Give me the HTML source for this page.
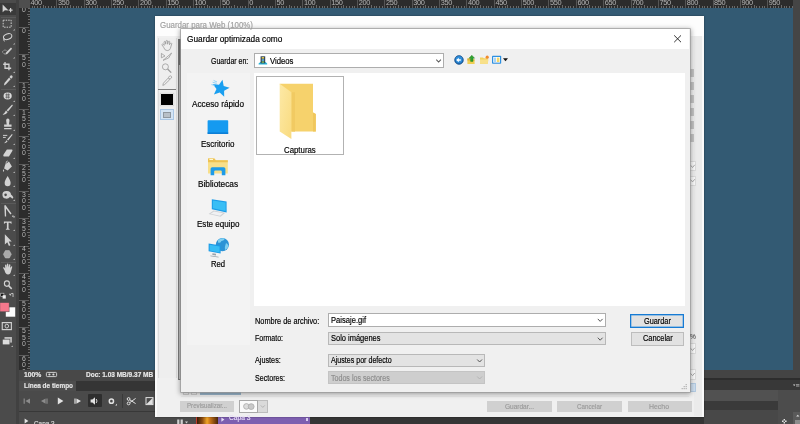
<!DOCTYPE html>
<html lang="es">
<head>
<meta charset="utf-8">
<title>Guardar optimizada como</title>
<style>
*{box-sizing:border-box;margin:0;padding:0}
html,body{width:800px;height:424px;overflow:hidden;background:#335a73;font-family:"Liberation Sans",sans-serif}
#app{position:relative;width:800px;height:424px;overflow:hidden;background:#335a73;filter:blur(.3px)}
.a{position:absolute}
svg{position:absolute;overflow:visible}
.t{position:absolute;white-space:nowrap;line-height:1;transform-origin:0 0;display:block;-webkit-text-stroke:.18px currentColor}
.rn{position:absolute;top:-.6px;font-size:7.4px;line-height:7px;color:#b4b4b4;white-space:nowrap;letter-spacing:-.35px}
.vn{position:absolute;left:20.5px;width:7px;font-size:6.9px;line-height:6.45px;color:#b4b4b4;text-align:center}
.htick{position:absolute;top:0;width:1px;height:8px;background:#555}
.vtick{position:absolute;left:19px;width:10px;height:1px;background:#5c5c5c}
#tools{left:0;top:0;width:16.2px;height:424px;background:#4b4b4b}
#hruler{left:19px;top:0;width:774px;height:8px;background:#2c2c2c;overflow:hidden}
#vruler{left:19px;top:8px;width:10.5px;height:362px;background:#2c2c2c;overflow:hidden}
#outer{left:155px;top:16px;width:549px;height:401.1px;background:#f0f0f0;box-shadow:0 0 1.5px rgba(0,0,0,.45)}
#inner{left:181.3px;top:29px;width:508.5px;height:362.5px;background:#f0f0f0;box-shadow:0 0 0 .7px #9c9c9c,0 1px 5px 1px rgba(0,0,0,.36)}
.combo{position:absolute;border:1px solid #b8b8b8;background:#e3e3e3}
.combo.w{background:#fff;border-color:#adadad}
.btn{position:absolute;border:1px solid #b2b2b2;background:#e2e2e2}
.gbtn{position:absolute;background:#d0d0d0}
.sq{position:absolute;left:689.5px;width:4.2px;height:8.5px;background:#c4c4c4}
.chv{position:absolute;left:689.5px;width:6.5px;height:10px;background:#fafafa;border:1px solid #dcdcdc;border-left:0}

</style>
</head>
<body>
<div id="app">
<!-- rulers -->
<div id="hruler" class="a">
<i class="htick" style="left:10.0px"></i><span class="rn" style="left:11.6px">400</span>
<i class="htick" style="left:12.7px;top:6px;height:2px;background:#6a6a6a"></i>
<i class="htick" style="left:15.4px;top:6px;height:2px;background:#6a6a6a"></i>
<i class="htick" style="left:18.2px;top:6px;height:2px;background:#6a6a6a"></i>
<i class="htick" style="left:20.9px;top:6px;height:2px;background:#6a6a6a"></i>
<i class="htick" style="left:23.7px;top:5px;height:3px;background:#6a6a6a"></i>
<i class="htick" style="left:26.4px;top:6px;height:2px;background:#6a6a6a"></i>
<i class="htick" style="left:29.1px;top:6px;height:2px;background:#6a6a6a"></i>
<i class="htick" style="left:31.9px;top:6px;height:2px;background:#6a6a6a"></i>
<i class="htick" style="left:34.6px;top:6px;height:2px;background:#6a6a6a"></i>
<i class="htick" style="left:37.3px"></i><span class="rn" style="left:38.9px">350</span>
<i class="htick" style="left:40.1px;top:6px;height:2px;background:#6a6a6a"></i>
<i class="htick" style="left:42.8px;top:6px;height:2px;background:#6a6a6a"></i>
<i class="htick" style="left:45.5px;top:6px;height:2px;background:#6a6a6a"></i>
<i class="htick" style="left:48.3px;top:6px;height:2px;background:#6a6a6a"></i>
<i class="htick" style="left:51.0px;top:5px;height:3px;background:#6a6a6a"></i>
<i class="htick" style="left:53.7px;top:6px;height:2px;background:#6a6a6a"></i>
<i class="htick" style="left:56.5px;top:6px;height:2px;background:#6a6a6a"></i>
<i class="htick" style="left:59.2px;top:6px;height:2px;background:#6a6a6a"></i>
<i class="htick" style="left:61.9px;top:6px;height:2px;background:#6a6a6a"></i>
<i class="htick" style="left:64.7px"></i><span class="rn" style="left:66.3px">300</span>
<i class="htick" style="left:67.4px;top:6px;height:2px;background:#6a6a6a"></i>
<i class="htick" style="left:70.1px;top:6px;height:2px;background:#6a6a6a"></i>
<i class="htick" style="left:72.9px;top:6px;height:2px;background:#6a6a6a"></i>
<i class="htick" style="left:75.6px;top:6px;height:2px;background:#6a6a6a"></i>
<i class="htick" style="left:78.3px;top:5px;height:3px;background:#6a6a6a"></i>
<i class="htick" style="left:81.1px;top:6px;height:2px;background:#6a6a6a"></i>
<i class="htick" style="left:83.8px;top:6px;height:2px;background:#6a6a6a"></i>
<i class="htick" style="left:86.5px;top:6px;height:2px;background:#6a6a6a"></i>
<i class="htick" style="left:89.3px;top:6px;height:2px;background:#6a6a6a"></i>
<i class="htick" style="left:92.0px"></i><span class="rn" style="left:93.6px">250</span>
<i class="htick" style="left:94.7px;top:6px;height:2px;background:#6a6a6a"></i>
<i class="htick" style="left:97.5px;top:6px;height:2px;background:#6a6a6a"></i>
<i class="htick" style="left:100.2px;top:6px;height:2px;background:#6a6a6a"></i>
<i class="htick" style="left:102.9px;top:6px;height:2px;background:#6a6a6a"></i>
<i class="htick" style="left:105.7px;top:5px;height:3px;background:#6a6a6a"></i>
<i class="htick" style="left:108.4px;top:6px;height:2px;background:#6a6a6a"></i>
<i class="htick" style="left:111.1px;top:6px;height:2px;background:#6a6a6a"></i>
<i class="htick" style="left:113.9px;top:6px;height:2px;background:#6a6a6a"></i>
<i class="htick" style="left:116.6px;top:6px;height:2px;background:#6a6a6a"></i>
<i class="htick" style="left:119.3px"></i><span class="rn" style="left:120.9px">200</span>
<i class="htick" style="left:122.1px;top:6px;height:2px;background:#6a6a6a"></i>
<i class="htick" style="left:124.8px;top:6px;height:2px;background:#6a6a6a"></i>
<i class="htick" style="left:127.5px;top:6px;height:2px;background:#6a6a6a"></i>
<i class="htick" style="left:130.3px;top:6px;height:2px;background:#6a6a6a"></i>
<i class="htick" style="left:133.0px;top:5px;height:3px;background:#6a6a6a"></i>
<i class="htick" style="left:135.7px;top:6px;height:2px;background:#6a6a6a"></i>
<i class="htick" style="left:138.5px;top:6px;height:2px;background:#6a6a6a"></i>
<i class="htick" style="left:141.2px;top:6px;height:2px;background:#6a6a6a"></i>
<i class="htick" style="left:143.9px;top:6px;height:2px;background:#6a6a6a"></i>
<i class="htick" style="left:146.7px"></i><span class="rn" style="left:148.3px">150</span>
<i class="htick" style="left:149.4px;top:6px;height:2px;background:#6a6a6a"></i>
<i class="htick" style="left:152.1px;top:6px;height:2px;background:#6a6a6a"></i>
<i class="htick" style="left:154.9px;top:6px;height:2px;background:#6a6a6a"></i>
<i class="htick" style="left:157.6px;top:6px;height:2px;background:#6a6a6a"></i>
<i class="htick" style="left:160.4px;top:5px;height:3px;background:#6a6a6a"></i>
<i class="htick" style="left:163.1px;top:6px;height:2px;background:#6a6a6a"></i>
<i class="htick" style="left:165.8px;top:6px;height:2px;background:#6a6a6a"></i>
<i class="htick" style="left:168.6px;top:6px;height:2px;background:#6a6a6a"></i>
<i class="htick" style="left:171.3px;top:6px;height:2px;background:#6a6a6a"></i>
<i class="htick" style="left:174.0px"></i><span class="rn" style="left:175.6px">100</span>
<i class="htick" style="left:176.8px;top:6px;height:2px;background:#6a6a6a"></i>
<i class="htick" style="left:179.5px;top:6px;height:2px;background:#6a6a6a"></i>
<i class="htick" style="left:182.2px;top:6px;height:2px;background:#6a6a6a"></i>
<i class="htick" style="left:185.0px;top:6px;height:2px;background:#6a6a6a"></i>
<i class="htick" style="left:187.7px;top:5px;height:3px;background:#6a6a6a"></i>
<i class="htick" style="left:190.4px;top:6px;height:2px;background:#6a6a6a"></i>
<i class="htick" style="left:193.2px;top:6px;height:2px;background:#6a6a6a"></i>
<i class="htick" style="left:195.9px;top:6px;height:2px;background:#6a6a6a"></i>
<i class="htick" style="left:198.6px;top:6px;height:2px;background:#6a6a6a"></i>
<i class="htick" style="left:201.4px"></i><span class="rn" style="left:203.0px">50</span>
<i class="htick" style="left:204.1px;top:6px;height:2px;background:#6a6a6a"></i>
<i class="htick" style="left:206.8px;top:6px;height:2px;background:#6a6a6a"></i>
<i class="htick" style="left:209.6px;top:6px;height:2px;background:#6a6a6a"></i>
<i class="htick" style="left:212.3px;top:6px;height:2px;background:#6a6a6a"></i>
<i class="htick" style="left:215.0px;top:5px;height:3px;background:#6a6a6a"></i>
<i class="htick" style="left:217.8px;top:6px;height:2px;background:#6a6a6a"></i>
<i class="htick" style="left:220.5px;top:6px;height:2px;background:#6a6a6a"></i>
<i class="htick" style="left:223.2px;top:6px;height:2px;background:#6a6a6a"></i>
<i class="htick" style="left:226.0px;top:6px;height:2px;background:#6a6a6a"></i>
<i class="htick" style="left:228.7px"></i><span class="rn" style="left:230.3px">0</span>
<i class="htick" style="left:231.4px;top:6px;height:2px;background:#6a6a6a"></i>
<i class="htick" style="left:234.2px;top:6px;height:2px;background:#6a6a6a"></i>
<i class="htick" style="left:236.9px;top:6px;height:2px;background:#6a6a6a"></i>
<i class="htick" style="left:239.6px;top:6px;height:2px;background:#6a6a6a"></i>
<i class="htick" style="left:242.4px;top:5px;height:3px;background:#6a6a6a"></i>
<i class="htick" style="left:245.1px;top:6px;height:2px;background:#6a6a6a"></i>
<i class="htick" style="left:247.8px;top:6px;height:2px;background:#6a6a6a"></i>
<i class="htick" style="left:250.6px;top:6px;height:2px;background:#6a6a6a"></i>
<i class="htick" style="left:253.3px;top:6px;height:2px;background:#6a6a6a"></i>
<i class="htick" style="left:256.0px"></i><span class="rn" style="left:257.6px">50</span>
<i class="htick" style="left:258.8px;top:6px;height:2px;background:#6a6a6a"></i>
<i class="htick" style="left:261.5px;top:6px;height:2px;background:#6a6a6a"></i>
<i class="htick" style="left:264.2px;top:6px;height:2px;background:#6a6a6a"></i>
<i class="htick" style="left:267.0px;top:6px;height:2px;background:#6a6a6a"></i>
<i class="htick" style="left:269.7px;top:5px;height:3px;background:#6a6a6a"></i>
<i class="htick" style="left:272.4px;top:6px;height:2px;background:#6a6a6a"></i>
<i class="htick" style="left:275.2px;top:6px;height:2px;background:#6a6a6a"></i>
<i class="htick" style="left:277.9px;top:6px;height:2px;background:#6a6a6a"></i>
<i class="htick" style="left:280.6px;top:6px;height:2px;background:#6a6a6a"></i>
<i class="htick" style="left:283.4px"></i><span class="rn" style="left:285.0px">100</span>
<i class="htick" style="left:286.1px;top:6px;height:2px;background:#6a6a6a"></i>
<i class="htick" style="left:288.8px;top:6px;height:2px;background:#6a6a6a"></i>
<i class="htick" style="left:291.6px;top:6px;height:2px;background:#6a6a6a"></i>
<i class="htick" style="left:294.3px;top:6px;height:2px;background:#6a6a6a"></i>
<i class="htick" style="left:297.1px;top:5px;height:3px;background:#6a6a6a"></i>
<i class="htick" style="left:299.8px;top:6px;height:2px;background:#6a6a6a"></i>
<i class="htick" style="left:302.5px;top:6px;height:2px;background:#6a6a6a"></i>
<i class="htick" style="left:305.3px;top:6px;height:2px;background:#6a6a6a"></i>
<i class="htick" style="left:308.0px;top:6px;height:2px;background:#6a6a6a"></i>
<i class="htick" style="left:310.7px"></i><span class="rn" style="left:312.3px">150</span>
<i class="htick" style="left:313.5px;top:6px;height:2px;background:#6a6a6a"></i>
<i class="htick" style="left:316.2px;top:6px;height:2px;background:#6a6a6a"></i>
<i class="htick" style="left:318.9px;top:6px;height:2px;background:#6a6a6a"></i>
<i class="htick" style="left:321.7px;top:6px;height:2px;background:#6a6a6a"></i>
<i class="htick" style="left:324.4px;top:5px;height:3px;background:#6a6a6a"></i>
<i class="htick" style="left:327.1px;top:6px;height:2px;background:#6a6a6a"></i>
<i class="htick" style="left:329.9px;top:6px;height:2px;background:#6a6a6a"></i>
<i class="htick" style="left:332.6px;top:6px;height:2px;background:#6a6a6a"></i>
<i class="htick" style="left:335.3px;top:6px;height:2px;background:#6a6a6a"></i>
<i class="htick" style="left:338.1px"></i><span class="rn" style="left:339.7px">200</span>
<i class="htick" style="left:340.8px;top:6px;height:2px;background:#6a6a6a"></i>
<i class="htick" style="left:343.5px;top:6px;height:2px;background:#6a6a6a"></i>
<i class="htick" style="left:346.3px;top:6px;height:2px;background:#6a6a6a"></i>
<i class="htick" style="left:349.0px;top:6px;height:2px;background:#6a6a6a"></i>
<i class="htick" style="left:351.7px;top:5px;height:3px;background:#6a6a6a"></i>
<i class="htick" style="left:354.5px;top:6px;height:2px;background:#6a6a6a"></i>
<i class="htick" style="left:357.2px;top:6px;height:2px;background:#6a6a6a"></i>
<i class="htick" style="left:359.9px;top:6px;height:2px;background:#6a6a6a"></i>
<i class="htick" style="left:362.7px;top:6px;height:2px;background:#6a6a6a"></i>
<i class="htick" style="left:365.4px"></i><span class="rn" style="left:367.0px">250</span>
<i class="htick" style="left:368.1px;top:6px;height:2px;background:#6a6a6a"></i>
<i class="htick" style="left:370.9px;top:6px;height:2px;background:#6a6a6a"></i>
<i class="htick" style="left:373.6px;top:6px;height:2px;background:#6a6a6a"></i>
<i class="htick" style="left:376.3px;top:6px;height:2px;background:#6a6a6a"></i>
<i class="htick" style="left:379.1px;top:5px;height:3px;background:#6a6a6a"></i>
<i class="htick" style="left:381.8px;top:6px;height:2px;background:#6a6a6a"></i>
<i class="htick" style="left:384.5px;top:6px;height:2px;background:#6a6a6a"></i>
<i class="htick" style="left:387.3px;top:6px;height:2px;background:#6a6a6a"></i>
<i class="htick" style="left:390.0px;top:6px;height:2px;background:#6a6a6a"></i>
<i class="htick" style="left:392.7px"></i><span class="rn" style="left:394.3px">300</span>
<i class="htick" style="left:395.5px;top:6px;height:2px;background:#6a6a6a"></i>
<i class="htick" style="left:398.2px;top:6px;height:2px;background:#6a6a6a"></i>
<i class="htick" style="left:400.9px;top:6px;height:2px;background:#6a6a6a"></i>
<i class="htick" style="left:403.7px;top:6px;height:2px;background:#6a6a6a"></i>
<i class="htick" style="left:406.4px;top:5px;height:3px;background:#6a6a6a"></i>
<i class="htick" style="left:409.1px;top:6px;height:2px;background:#6a6a6a"></i>
<i class="htick" style="left:411.9px;top:6px;height:2px;background:#6a6a6a"></i>
<i class="htick" style="left:414.6px;top:6px;height:2px;background:#6a6a6a"></i>
<i class="htick" style="left:417.3px;top:6px;height:2px;background:#6a6a6a"></i>
<i class="htick" style="left:420.1px"></i><span class="rn" style="left:421.7px">350</span>
<i class="htick" style="left:422.8px;top:6px;height:2px;background:#6a6a6a"></i>
<i class="htick" style="left:425.5px;top:6px;height:2px;background:#6a6a6a"></i>
<i class="htick" style="left:428.3px;top:6px;height:2px;background:#6a6a6a"></i>
<i class="htick" style="left:431.0px;top:6px;height:2px;background:#6a6a6a"></i>
<i class="htick" style="left:433.8px;top:5px;height:3px;background:#6a6a6a"></i>
<i class="htick" style="left:436.5px;top:6px;height:2px;background:#6a6a6a"></i>
<i class="htick" style="left:439.2px;top:6px;height:2px;background:#6a6a6a"></i>
<i class="htick" style="left:442.0px;top:6px;height:2px;background:#6a6a6a"></i>
<i class="htick" style="left:444.7px;top:6px;height:2px;background:#6a6a6a"></i>
<i class="htick" style="left:447.4px"></i><span class="rn" style="left:449.0px">400</span>
<i class="htick" style="left:450.2px;top:6px;height:2px;background:#6a6a6a"></i>
<i class="htick" style="left:452.9px;top:6px;height:2px;background:#6a6a6a"></i>
<i class="htick" style="left:455.6px;top:6px;height:2px;background:#6a6a6a"></i>
<i class="htick" style="left:458.4px;top:6px;height:2px;background:#6a6a6a"></i>
<i class="htick" style="left:461.1px;top:5px;height:3px;background:#6a6a6a"></i>
<i class="htick" style="left:463.8px;top:6px;height:2px;background:#6a6a6a"></i>
<i class="htick" style="left:466.6px;top:6px;height:2px;background:#6a6a6a"></i>
<i class="htick" style="left:469.3px;top:6px;height:2px;background:#6a6a6a"></i>
<i class="htick" style="left:472.0px;top:6px;height:2px;background:#6a6a6a"></i>
<i class="htick" style="left:474.8px"></i><span class="rn" style="left:476.4px">450</span>
<i class="htick" style="left:477.5px;top:6px;height:2px;background:#6a6a6a"></i>
<i class="htick" style="left:480.2px;top:6px;height:2px;background:#6a6a6a"></i>
<i class="htick" style="left:483.0px;top:6px;height:2px;background:#6a6a6a"></i>
<i class="htick" style="left:485.7px;top:6px;height:2px;background:#6a6a6a"></i>
<i class="htick" style="left:488.4px;top:5px;height:3px;background:#6a6a6a"></i>
<i class="htick" style="left:491.2px;top:6px;height:2px;background:#6a6a6a"></i>
<i class="htick" style="left:493.9px;top:6px;height:2px;background:#6a6a6a"></i>
<i class="htick" style="left:496.6px;top:6px;height:2px;background:#6a6a6a"></i>
<i class="htick" style="left:499.4px;top:6px;height:2px;background:#6a6a6a"></i>
<i class="htick" style="left:502.1px"></i><span class="rn" style="left:503.7px">500</span>
<i class="htick" style="left:504.8px;top:6px;height:2px;background:#6a6a6a"></i>
<i class="htick" style="left:507.6px;top:6px;height:2px;background:#6a6a6a"></i>
<i class="htick" style="left:510.3px;top:6px;height:2px;background:#6a6a6a"></i>
<i class="htick" style="left:513.0px;top:6px;height:2px;background:#6a6a6a"></i>
<i class="htick" style="left:515.8px;top:5px;height:3px;background:#6a6a6a"></i>
<i class="htick" style="left:518.5px;top:6px;height:2px;background:#6a6a6a"></i>
<i class="htick" style="left:521.2px;top:6px;height:2px;background:#6a6a6a"></i>
<i class="htick" style="left:524.0px;top:6px;height:2px;background:#6a6a6a"></i>
<i class="htick" style="left:526.7px;top:6px;height:2px;background:#6a6a6a"></i>
<i class="htick" style="left:529.4px"></i><span class="rn" style="left:531.0px">550</span>
<i class="htick" style="left:532.2px;top:6px;height:2px;background:#6a6a6a"></i>
<i class="htick" style="left:534.9px;top:6px;height:2px;background:#6a6a6a"></i>
<i class="htick" style="left:537.6px;top:6px;height:2px;background:#6a6a6a"></i>
<i class="htick" style="left:540.4px;top:6px;height:2px;background:#6a6a6a"></i>
<i class="htick" style="left:543.1px;top:5px;height:3px;background:#6a6a6a"></i>
<i class="htick" style="left:545.8px;top:6px;height:2px;background:#6a6a6a"></i>
<i class="htick" style="left:548.6px;top:6px;height:2px;background:#6a6a6a"></i>
<i class="htick" style="left:551.3px;top:6px;height:2px;background:#6a6a6a"></i>
<i class="htick" style="left:554.0px;top:6px;height:2px;background:#6a6a6a"></i>
<i class="htick" style="left:556.8px"></i><span class="rn" style="left:558.4px">600</span>
<i class="htick" style="left:559.5px;top:6px;height:2px;background:#6a6a6a"></i>
<i class="htick" style="left:562.2px;top:6px;height:2px;background:#6a6a6a"></i>
<i class="htick" style="left:565.0px;top:6px;height:2px;background:#6a6a6a"></i>
<i class="htick" style="left:567.7px;top:6px;height:2px;background:#6a6a6a"></i>
<i class="htick" style="left:570.4px;top:5px;height:3px;background:#6a6a6a"></i>
<i class="htick" style="left:573.2px;top:6px;height:2px;background:#6a6a6a"></i>
<i class="htick" style="left:575.9px;top:6px;height:2px;background:#6a6a6a"></i>
<i class="htick" style="left:578.7px;top:6px;height:2px;background:#6a6a6a"></i>
<i class="htick" style="left:581.4px;top:6px;height:2px;background:#6a6a6a"></i>
<i class="htick" style="left:584.1px"></i><span class="rn" style="left:585.7px">650</span>
<i class="htick" style="left:586.9px;top:6px;height:2px;background:#6a6a6a"></i>
<i class="htick" style="left:589.6px;top:6px;height:2px;background:#6a6a6a"></i>
<i class="htick" style="left:592.3px;top:6px;height:2px;background:#6a6a6a"></i>
<i class="htick" style="left:595.1px;top:6px;height:2px;background:#6a6a6a"></i>
<i class="htick" style="left:597.8px;top:5px;height:3px;background:#6a6a6a"></i>
<i class="htick" style="left:600.5px;top:6px;height:2px;background:#6a6a6a"></i>
<i class="htick" style="left:603.3px;top:6px;height:2px;background:#6a6a6a"></i>
<i class="htick" style="left:606.0px;top:6px;height:2px;background:#6a6a6a"></i>
<i class="htick" style="left:608.7px;top:6px;height:2px;background:#6a6a6a"></i>
<i class="htick" style="left:611.5px"></i><span class="rn" style="left:613.1px">700</span>
<i class="htick" style="left:614.2px;top:6px;height:2px;background:#6a6a6a"></i>
<i class="htick" style="left:616.9px;top:6px;height:2px;background:#6a6a6a"></i>
<i class="htick" style="left:619.7px;top:6px;height:2px;background:#6a6a6a"></i>
<i class="htick" style="left:622.4px;top:6px;height:2px;background:#6a6a6a"></i>
<i class="htick" style="left:625.1px;top:5px;height:3px;background:#6a6a6a"></i>
<i class="htick" style="left:627.9px;top:6px;height:2px;background:#6a6a6a"></i>
<i class="htick" style="left:630.6px;top:6px;height:2px;background:#6a6a6a"></i>
<i class="htick" style="left:633.3px;top:6px;height:2px;background:#6a6a6a"></i>
<i class="htick" style="left:636.1px;top:6px;height:2px;background:#6a6a6a"></i>
<i class="htick" style="left:638.8px"></i><span class="rn" style="left:640.4px">750</span>
<i class="htick" style="left:641.5px;top:6px;height:2px;background:#6a6a6a"></i>
<i class="htick" style="left:644.3px;top:6px;height:2px;background:#6a6a6a"></i>
<i class="htick" style="left:647.0px;top:6px;height:2px;background:#6a6a6a"></i>
<i class="htick" style="left:649.7px;top:6px;height:2px;background:#6a6a6a"></i>
<i class="htick" style="left:652.5px;top:5px;height:3px;background:#6a6a6a"></i>
<i class="htick" style="left:655.2px;top:6px;height:2px;background:#6a6a6a"></i>
<i class="htick" style="left:657.9px;top:6px;height:2px;background:#6a6a6a"></i>
<i class="htick" style="left:660.7px;top:6px;height:2px;background:#6a6a6a"></i>
<i class="htick" style="left:663.4px;top:6px;height:2px;background:#6a6a6a"></i>
<i class="htick" style="left:666.1px"></i><span class="rn" style="left:667.7px">800</span>
<i class="htick" style="left:668.9px;top:6px;height:2px;background:#6a6a6a"></i>
<i class="htick" style="left:671.6px;top:6px;height:2px;background:#6a6a6a"></i>
<i class="htick" style="left:674.3px;top:6px;height:2px;background:#6a6a6a"></i>
<i class="htick" style="left:677.1px;top:6px;height:2px;background:#6a6a6a"></i>
<i class="htick" style="left:679.8px;top:5px;height:3px;background:#6a6a6a"></i>
<i class="htick" style="left:682.5px;top:6px;height:2px;background:#6a6a6a"></i>
<i class="htick" style="left:685.3px;top:6px;height:2px;background:#6a6a6a"></i>
<i class="htick" style="left:688.0px;top:6px;height:2px;background:#6a6a6a"></i>
<i class="htick" style="left:690.7px;top:6px;height:2px;background:#6a6a6a"></i>
<i class="htick" style="left:693.5px"></i><span class="rn" style="left:695.1px">850</span>
<i class="htick" style="left:696.2px;top:6px;height:2px;background:#6a6a6a"></i>
<i class="htick" style="left:698.9px;top:6px;height:2px;background:#6a6a6a"></i>
<i class="htick" style="left:701.7px;top:6px;height:2px;background:#6a6a6a"></i>
<i class="htick" style="left:704.4px;top:6px;height:2px;background:#6a6a6a"></i>
<i class="htick" style="left:707.1px;top:5px;height:3px;background:#6a6a6a"></i>
<i class="htick" style="left:709.9px;top:6px;height:2px;background:#6a6a6a"></i>
<i class="htick" style="left:712.6px;top:6px;height:2px;background:#6a6a6a"></i>
<i class="htick" style="left:715.4px;top:6px;height:2px;background:#6a6a6a"></i>
<i class="htick" style="left:718.1px;top:6px;height:2px;background:#6a6a6a"></i>
<i class="htick" style="left:720.8px"></i><span class="rn" style="left:722.4px">900</span>
<i class="htick" style="left:723.6px;top:6px;height:2px;background:#6a6a6a"></i>
<i class="htick" style="left:726.3px;top:6px;height:2px;background:#6a6a6a"></i>
<i class="htick" style="left:729.0px;top:6px;height:2px;background:#6a6a6a"></i>
<i class="htick" style="left:731.8px;top:6px;height:2px;background:#6a6a6a"></i>
<i class="htick" style="left:734.5px;top:5px;height:3px;background:#6a6a6a"></i>
<i class="htick" style="left:737.2px;top:6px;height:2px;background:#6a6a6a"></i>
<i class="htick" style="left:740.0px;top:6px;height:2px;background:#6a6a6a"></i>
<i class="htick" style="left:742.7px;top:6px;height:2px;background:#6a6a6a"></i>
<i class="htick" style="left:745.4px;top:6px;height:2px;background:#6a6a6a"></i>
<i class="htick" style="left:748.2px"></i><span class="rn" style="left:749.8px">950</span>
<i class="htick" style="left:750.9px;top:6px;height:2px;background:#6a6a6a"></i>
<i class="htick" style="left:753.6px;top:6px;height:2px;background:#6a6a6a"></i>
<i class="htick" style="left:756.4px;top:6px;height:2px;background:#6a6a6a"></i>
<i class="htick" style="left:759.1px;top:6px;height:2px;background:#6a6a6a"></i>
<i class="htick" style="left:761.8px;top:5px;height:3px;background:#6a6a6a"></i>
<i class="htick" style="left:764.6px;top:6px;height:2px;background:#6a6a6a"></i>
<i class="htick" style="left:767.3px;top:6px;height:2px;background:#6a6a6a"></i>
<i class="htick" style="left:770.0px;top:6px;height:2px;background:#6a6a6a"></i>
<i class="htick" style="left:772.8px;top:6px;height:2px;background:#6a6a6a"></i>
</div>
<div id="vruler" class="a">
<i class="vtick" style="left:0;top:-8.2px"></i><span class="vn" style="left:1.5px;top:-7.3px">5<br>0</span>
<i class="vtick" style="left:8.5px;width:2px;top:-5.5px;background:#6a6a6a"></i>
<i class="vtick" style="left:8.5px;width:2px;top:-2.7px;background:#6a6a6a"></i>
<i class="vtick" style="left:8.5px;width:2px;top:-0.0px;background:#6a6a6a"></i>
<i class="vtick" style="left:8.5px;width:2px;top:2.7px;background:#6a6a6a"></i>
<i class="vtick" style="left:7.5px;width:3px;top:5.5px;background:#6a6a6a"></i>
<i class="vtick" style="left:8.5px;width:2px;top:8.2px;background:#6a6a6a"></i>
<i class="vtick" style="left:8.5px;width:2px;top:10.9px;background:#6a6a6a"></i>
<i class="vtick" style="left:8.5px;width:2px;top:13.6px;background:#6a6a6a"></i>
<i class="vtick" style="left:8.5px;width:2px;top:16.4px;background:#6a6a6a"></i>
<i class="vtick" style="left:0;top:19.1px"></i><span class="vn" style="left:1.5px;top:20.0px">0</span>
<i class="vtick" style="left:8.5px;width:2px;top:21.8px;background:#6a6a6a"></i>
<i class="vtick" style="left:8.5px;width:2px;top:24.6px;background:#6a6a6a"></i>
<i class="vtick" style="left:8.5px;width:2px;top:27.3px;background:#6a6a6a"></i>
<i class="vtick" style="left:8.5px;width:2px;top:30.0px;background:#6a6a6a"></i>
<i class="vtick" style="left:7.5px;width:3px;top:32.8px;background:#6a6a6a"></i>
<i class="vtick" style="left:8.5px;width:2px;top:35.5px;background:#6a6a6a"></i>
<i class="vtick" style="left:8.5px;width:2px;top:38.2px;background:#6a6a6a"></i>
<i class="vtick" style="left:8.5px;width:2px;top:40.9px;background:#6a6a6a"></i>
<i class="vtick" style="left:8.5px;width:2px;top:43.7px;background:#6a6a6a"></i>
<i class="vtick" style="left:0;top:46.4px"></i><span class="vn" style="left:1.5px;top:47.3px">5<br>0</span>
<i class="vtick" style="left:8.5px;width:2px;top:49.1px;background:#6a6a6a"></i>
<i class="vtick" style="left:8.5px;width:2px;top:51.9px;background:#6a6a6a"></i>
<i class="vtick" style="left:8.5px;width:2px;top:54.6px;background:#6a6a6a"></i>
<i class="vtick" style="left:8.5px;width:2px;top:57.3px;background:#6a6a6a"></i>
<i class="vtick" style="left:7.5px;width:3px;top:60.1px;background:#6a6a6a"></i>
<i class="vtick" style="left:8.5px;width:2px;top:62.8px;background:#6a6a6a"></i>
<i class="vtick" style="left:8.5px;width:2px;top:65.5px;background:#6a6a6a"></i>
<i class="vtick" style="left:8.5px;width:2px;top:68.2px;background:#6a6a6a"></i>
<i class="vtick" style="left:8.5px;width:2px;top:71.0px;background:#6a6a6a"></i>
<i class="vtick" style="left:0;top:73.7px"></i><span class="vn" style="left:1.5px;top:74.6px">1<br>0<br>0</span>
<i class="vtick" style="left:8.5px;width:2px;top:76.4px;background:#6a6a6a"></i>
<i class="vtick" style="left:8.5px;width:2px;top:79.2px;background:#6a6a6a"></i>
<i class="vtick" style="left:8.5px;width:2px;top:81.9px;background:#6a6a6a"></i>
<i class="vtick" style="left:8.5px;width:2px;top:84.6px;background:#6a6a6a"></i>
<i class="vtick" style="left:7.5px;width:3px;top:87.4px;background:#6a6a6a"></i>
<i class="vtick" style="left:8.5px;width:2px;top:90.1px;background:#6a6a6a"></i>
<i class="vtick" style="left:8.5px;width:2px;top:92.8px;background:#6a6a6a"></i>
<i class="vtick" style="left:8.5px;width:2px;top:95.5px;background:#6a6a6a"></i>
<i class="vtick" style="left:8.5px;width:2px;top:98.3px;background:#6a6a6a"></i>
<i class="vtick" style="left:0;top:101.0px"></i><span class="vn" style="left:1.5px;top:101.9px">1<br>5<br>0</span>
<i class="vtick" style="left:8.5px;width:2px;top:103.7px;background:#6a6a6a"></i>
<i class="vtick" style="left:8.5px;width:2px;top:106.5px;background:#6a6a6a"></i>
<i class="vtick" style="left:8.5px;width:2px;top:109.2px;background:#6a6a6a"></i>
<i class="vtick" style="left:8.5px;width:2px;top:111.9px;background:#6a6a6a"></i>
<i class="vtick" style="left:7.5px;width:3px;top:114.7px;background:#6a6a6a"></i>
<i class="vtick" style="left:8.5px;width:2px;top:117.4px;background:#6a6a6a"></i>
<i class="vtick" style="left:8.5px;width:2px;top:120.1px;background:#6a6a6a"></i>
<i class="vtick" style="left:8.5px;width:2px;top:122.8px;background:#6a6a6a"></i>
<i class="vtick" style="left:8.5px;width:2px;top:125.6px;background:#6a6a6a"></i>
<i class="vtick" style="left:0;top:128.3px"></i><span class="vn" style="left:1.5px;top:129.2px">2<br>0<br>0</span>
<i class="vtick" style="left:8.5px;width:2px;top:131.0px;background:#6a6a6a"></i>
<i class="vtick" style="left:8.5px;width:2px;top:133.8px;background:#6a6a6a"></i>
<i class="vtick" style="left:8.5px;width:2px;top:136.5px;background:#6a6a6a"></i>
<i class="vtick" style="left:8.5px;width:2px;top:139.2px;background:#6a6a6a"></i>
<i class="vtick" style="left:7.5px;width:3px;top:142.0px;background:#6a6a6a"></i>
<i class="vtick" style="left:8.5px;width:2px;top:144.7px;background:#6a6a6a"></i>
<i class="vtick" style="left:8.5px;width:2px;top:147.4px;background:#6a6a6a"></i>
<i class="vtick" style="left:8.5px;width:2px;top:150.1px;background:#6a6a6a"></i>
<i class="vtick" style="left:8.5px;width:2px;top:152.9px;background:#6a6a6a"></i>
<i class="vtick" style="left:0;top:155.6px"></i><span class="vn" style="left:1.5px;top:156.5px">2<br>5<br>0</span>
<i class="vtick" style="left:8.5px;width:2px;top:158.3px;background:#6a6a6a"></i>
<i class="vtick" style="left:8.5px;width:2px;top:161.1px;background:#6a6a6a"></i>
<i class="vtick" style="left:8.5px;width:2px;top:163.8px;background:#6a6a6a"></i>
<i class="vtick" style="left:8.5px;width:2px;top:166.5px;background:#6a6a6a"></i>
<i class="vtick" style="left:7.5px;width:3px;top:169.2px;background:#6a6a6a"></i>
<i class="vtick" style="left:8.5px;width:2px;top:172.0px;background:#6a6a6a"></i>
<i class="vtick" style="left:8.5px;width:2px;top:174.7px;background:#6a6a6a"></i>
<i class="vtick" style="left:8.5px;width:2px;top:177.4px;background:#6a6a6a"></i>
<i class="vtick" style="left:8.5px;width:2px;top:180.2px;background:#6a6a6a"></i>
<i class="vtick" style="left:0;top:182.9px"></i><span class="vn" style="left:1.5px;top:183.8px">3<br>0<br>0</span>
<i class="vtick" style="left:8.5px;width:2px;top:185.6px;background:#6a6a6a"></i>
<i class="vtick" style="left:8.5px;width:2px;top:188.4px;background:#6a6a6a"></i>
<i class="vtick" style="left:8.5px;width:2px;top:191.1px;background:#6a6a6a"></i>
<i class="vtick" style="left:8.5px;width:2px;top:193.8px;background:#6a6a6a"></i>
<i class="vtick" style="left:7.5px;width:3px;top:196.6px;background:#6a6a6a"></i>
<i class="vtick" style="left:8.5px;width:2px;top:199.3px;background:#6a6a6a"></i>
<i class="vtick" style="left:8.5px;width:2px;top:202.0px;background:#6a6a6a"></i>
<i class="vtick" style="left:8.5px;width:2px;top:204.7px;background:#6a6a6a"></i>
<i class="vtick" style="left:8.5px;width:2px;top:207.5px;background:#6a6a6a"></i>
<i class="vtick" style="left:0;top:210.2px"></i><span class="vn" style="left:1.5px;top:211.1px">3<br>5<br>0</span>
<i class="vtick" style="left:8.5px;width:2px;top:212.9px;background:#6a6a6a"></i>
<i class="vtick" style="left:8.5px;width:2px;top:215.7px;background:#6a6a6a"></i>
<i class="vtick" style="left:8.5px;width:2px;top:218.4px;background:#6a6a6a"></i>
<i class="vtick" style="left:8.5px;width:2px;top:221.1px;background:#6a6a6a"></i>
<i class="vtick" style="left:7.5px;width:3px;top:223.8px;background:#6a6a6a"></i>
<i class="vtick" style="left:8.5px;width:2px;top:226.6px;background:#6a6a6a"></i>
<i class="vtick" style="left:8.5px;width:2px;top:229.3px;background:#6a6a6a"></i>
<i class="vtick" style="left:8.5px;width:2px;top:232.0px;background:#6a6a6a"></i>
<i class="vtick" style="left:8.5px;width:2px;top:234.8px;background:#6a6a6a"></i>
<i class="vtick" style="left:0;top:237.5px"></i><span class="vn" style="left:1.5px;top:238.4px">4<br>0<br>0</span>
<i class="vtick" style="left:8.5px;width:2px;top:240.2px;background:#6a6a6a"></i>
<i class="vtick" style="left:8.5px;width:2px;top:243.0px;background:#6a6a6a"></i>
<i class="vtick" style="left:8.5px;width:2px;top:245.7px;background:#6a6a6a"></i>
<i class="vtick" style="left:8.5px;width:2px;top:248.4px;background:#6a6a6a"></i>
<i class="vtick" style="left:7.5px;width:3px;top:251.2px;background:#6a6a6a"></i>
<i class="vtick" style="left:8.5px;width:2px;top:253.9px;background:#6a6a6a"></i>
<i class="vtick" style="left:8.5px;width:2px;top:256.6px;background:#6a6a6a"></i>
<i class="vtick" style="left:8.5px;width:2px;top:259.3px;background:#6a6a6a"></i>
<i class="vtick" style="left:8.5px;width:2px;top:262.1px;background:#6a6a6a"></i>
<i class="vtick" style="left:0;top:264.8px"></i><span class="vn" style="left:1.5px;top:265.7px">4<br>5<br>0</span>
<i class="vtick" style="left:8.5px;width:2px;top:267.5px;background:#6a6a6a"></i>
<i class="vtick" style="left:8.5px;width:2px;top:270.3px;background:#6a6a6a"></i>
<i class="vtick" style="left:8.5px;width:2px;top:273.0px;background:#6a6a6a"></i>
<i class="vtick" style="left:8.5px;width:2px;top:275.7px;background:#6a6a6a"></i>
<i class="vtick" style="left:7.5px;width:3px;top:278.4px;background:#6a6a6a"></i>
<i class="vtick" style="left:8.5px;width:2px;top:281.2px;background:#6a6a6a"></i>
<i class="vtick" style="left:8.5px;width:2px;top:283.9px;background:#6a6a6a"></i>
<i class="vtick" style="left:8.5px;width:2px;top:286.6px;background:#6a6a6a"></i>
<i class="vtick" style="left:8.5px;width:2px;top:289.4px;background:#6a6a6a"></i>
<i class="vtick" style="left:0;top:292.1px"></i><span class="vn" style="left:1.5px;top:293.0px">5<br>0<br>0</span>
<i class="vtick" style="left:8.5px;width:2px;top:294.8px;background:#6a6a6a"></i>
<i class="vtick" style="left:8.5px;width:2px;top:297.6px;background:#6a6a6a"></i>
<i class="vtick" style="left:8.5px;width:2px;top:300.3px;background:#6a6a6a"></i>
<i class="vtick" style="left:8.5px;width:2px;top:303.0px;background:#6a6a6a"></i>
<i class="vtick" style="left:7.5px;width:3px;top:305.8px;background:#6a6a6a"></i>
<i class="vtick" style="left:8.5px;width:2px;top:308.5px;background:#6a6a6a"></i>
<i class="vtick" style="left:8.5px;width:2px;top:311.2px;background:#6a6a6a"></i>
<i class="vtick" style="left:8.5px;width:2px;top:313.9px;background:#6a6a6a"></i>
<i class="vtick" style="left:8.5px;width:2px;top:316.7px;background:#6a6a6a"></i>
<i class="vtick" style="left:0;top:319.4px"></i><span class="vn" style="left:1.5px;top:320.3px">5<br>5<br>0</span>
<i class="vtick" style="left:8.5px;width:2px;top:322.1px;background:#6a6a6a"></i>
<i class="vtick" style="left:8.5px;width:2px;top:324.9px;background:#6a6a6a"></i>
<i class="vtick" style="left:8.5px;width:2px;top:327.6px;background:#6a6a6a"></i>
<i class="vtick" style="left:8.5px;width:2px;top:330.3px;background:#6a6a6a"></i>
<i class="vtick" style="left:7.5px;width:3px;top:333.1px;background:#6a6a6a"></i>
<i class="vtick" style="left:8.5px;width:2px;top:335.8px;background:#6a6a6a"></i>
<i class="vtick" style="left:8.5px;width:2px;top:338.5px;background:#6a6a6a"></i>
<i class="vtick" style="left:8.5px;width:2px;top:341.2px;background:#6a6a6a"></i>
<i class="vtick" style="left:8.5px;width:2px;top:344.0px;background:#6a6a6a"></i>
<i class="vtick" style="left:0;top:346.7px"></i><span class="vn" style="left:1.5px;top:347.6px">6<br>0<br>0</span>
<i class="vtick" style="left:8.5px;width:2px;top:349.4px;background:#6a6a6a"></i>
<i class="vtick" style="left:8.5px;width:2px;top:352.2px;background:#6a6a6a"></i>
<i class="vtick" style="left:8.5px;width:2px;top:354.9px;background:#6a6a6a"></i>
<i class="vtick" style="left:8.5px;width:2px;top:357.6px;background:#6a6a6a"></i>
<i class="vtick" style="left:7.5px;width:3px;top:360.4px;background:#6a6a6a"></i>
<i class="vtick" style="left:8.5px;width:2px;top:363.1px;background:#6a6a6a"></i>
<i class="vtick" style="left:8.5px;width:2px;top:365.8px;background:#6a6a6a"></i>
<i class="vtick" style="left:8.5px;width:2px;top:368.5px;background:#6a6a6a"></i>
<i class="vtick" style="left:8.5px;width:2px;top:371.3px;background:#6a6a6a"></i>
</div>
<div class="a" style="left:16.2px;top:0;width:2.8px;height:424px;background:#414141"></div>
<div class="a" style="left:19px;top:0;width:10.5px;height:7.6px;background:#4e4e4e"></div>
<div class="a" style="left:793px;top:0;width:7px;height:378px;background:#454545"></div>
<!-- ===== Photoshop tool bar ===== -->
<div id="tools" class="a">
  <div class="a" style="left:0;top:3.2px;width:16.2px;height:11.8px;background:#3a3a3a"></div>
  <div class="a" style="left:1px;top:16.5px;width:15px;height:1px;background:#5a5a5a"></div>
  <div class="a" style="left:1px;top:88.5px;width:15px;height:1px;background:#5a5a5a"></div>
  <div class="a" style="left:1px;top:202.5px;width:15px;height:1px;background:#5a5a5a"></div>
  <div class="a" style="left:1px;top:261.5px;width:15px;height:1px;background:#5a5a5a"></div>
  <svg style="left:0;top:0" width="18" height="350" viewBox="0 0 18 350" fill="#d2d2d2" stroke="none"><g transform="translate(.2 0) scale(.93 1)">
    <!-- move -->
    <path d="M2.6 4.6 L2.6 12.2 L5 10.2 L9 10.4 Z"/><path d="M9.2 9.5h1.4v-1.6h1.2v1.6h1.5v1.2h-1.5v1.6h-1.2v-1.6h-1.4z"/>
    <!-- marquee -->
    <rect x="3.2" y="20.2" width="8.6" height="7" fill="none" stroke="#d2d2d2" stroke-width="1" stroke-dasharray="1.6 1.1"/>
    <!-- lasso -->
    <ellipse cx="8" cy="36.6" rx="4.6" ry="2.8" fill="none" stroke="#d2d2d2" stroke-width="1.1" transform="rotate(-18 8 36.6)"/><path d="M4.2 38.4 q-1 1.6 .4 3" fill="none" stroke="#d2d2d2" stroke-width="1"/>
    <!-- quick select -->
    <path d="M11.6 47.6 L12.8 48.8 L7.6 54 L5.6 54.6 L6.3 52.6 Z"/><ellipse cx="5.2" cy="52" rx="2.6" ry="1.9" fill="none" stroke="#d2d2d2" stroke-width=".8" stroke-dasharray="1 .8"/>
    <!-- crop -->
    <path d="M5.2 62v6.2h6.6M3.2 64.2h6.2v6" fill="none" stroke="#d2d2d2" stroke-width="1.4"/>
    <!-- eyedropper -->
    <path d="M11.2 75.4 a1.5 1.5 0 0 1 2 2 L11.8 78.8 L10 77 Z M9.6 77.6 L11.2 79.2 L6 84.4 L4 85.4 L4.6 83 Z"/>
    <!-- healing -->
    <ellipse cx="8" cy="96" rx="4.4" ry="3.4" fill="#dcdcdc"/><path d="M5.6 94.4h4.8M5.6 96h4.8M5.6 97.6h4.8M7 93.4v5.2M9 93.4v5.2" stroke="#4b4b4b" stroke-width=".6"/>
    <!-- brush -->
    <path d="M12.8 104.6 L13.6 105.4 L8.4 111.4 L7 110.2 Z M6.2 110.6 L8 112.2 Q6.4 115 2.6 114.6 Q4.8 113.4 6.2 110.6Z"/>
    <!-- stamp -->
    <path d="M6.4 120.4 a1.8 1.8 0 0 1 3.6 0 L9.4 124.6 h2.8 v2.2 h-8 v-2.2 h2.8 Z M4.2 128h8v1.2h-8z"/>
    <!-- history brush -->
    <path d="M12.6 134 L13.4 134.8 L8.6 140.6 L7.4 139.6 Z M6.8 140.2 L8 141.2 Q6.8 143.2 4 143.2 Q5.8 142 6.8 140.2Z"/><path d="M3 135.4 l4.6 0 M3 137.4 l3 0" stroke="#d2d2d2" stroke-width="1"/>
    <!-- eraser -->
    <path d="M7.2 149.4 L12.8 149.4 Q13.6 150.2 13 151 L9.4 156.4 L3.8 156.4 Q2.8 155.4 3.6 154.4 Z"/>
    <!-- bucket -->
    <path d="M5.4 164.4 L9.4 161.6 L12.6 166.6 L8 170.4 L4.2 168.6 Z M3.6 169 q-1.4 2 0 3 q1.4 -1 0 -3z"/><path d="M6.2 164 q0 -3.4 2 -3" stroke="#d2d2d2" stroke-width=".8" fill="none"/>
    <!-- blur drop -->
    <path d="M8 176 Q11.4 181 11.2 183 a3.2 3.2 0 0 1 -6.4 0 Q4.6 181 8 176Z"/>
    <!-- dodge -->
    <path d="M2.4 195 a4.6 3.8 0 0 1 9.2 -.4 q1.6 1 2.6 3 l-1.2 1.2 q-1.2 -1.6 -2.6 -1.8 q-1.6 2 -4.4 1.6 q-3.6 -.6 -3.6 -3.6z"/><circle cx="5.8" cy="194.8" r="1.4" fill="#4b4b4b"/>
    <!-- pen -->
    <path d="M4.4 205.4 L5.6 205 L12.2 213.6 L11 214.4 L6.2 208.6 L6.4 216.4 L5 216.4 Z"/><path d="M13 215.6h1.4v1.4h-1.4z"/>
    <!-- T -->
    <path d="M4 221.6h8.2v2.2h-.7q-.2 -1.1 -1.3 -1.1h-1.2v5.6q0 .7 1.1 .7v.7h-4v-.7q1.1 0 1.1 -.7v-5.6h-1.2q-1.1 0 -1.3 1.1h-.7z"/>
    <!-- path select -->
    <path d="M5 234.2 L5 244.6 L7.6 242.2 L9.4 246 L11 245.2 L9.2 241.6 L12.4 241.4 Z"/>
    <!-- hexagon -->
    <path d="M5.6 250.6 h4.2 l2.2 3.7 l-2.2 3.7 h-4.2 l-2.2 -3.7z" fill="#a9a9a9" stroke="#c4c4c4" stroke-width=".5"/>
    <!-- hand -->
    <path d="M4.6 270.2 L3 267.8 Q3.4 266.8 4.6 267.6 L5.4 268.6 L5.2 265 Q6 264.2 6.6 265 L6.9 267.4 L7.2 264 Q8 263.2 8.7 264 L8.8 267.4 L9.6 264.6 Q10.4 264 11 264.8 L10.6 268 L11.8 266.4 Q12.6 266 13 266.8 L11.6 271.6 Q11 274.6 8.4 274.6 Q5.8 274.6 4.6 270.2Z"/>
    <!-- zoom -->
    <circle cx="7.2" cy="283.6" r="2.7" fill="none" stroke="#d2d2d2" stroke-width="1.2"/><path d="M9.2 285.8 L12.4 288.8" stroke="#d2d2d2" stroke-width="1.7"/>
    <!-- default/swap colours -->
    <rect x=".6" y="293.2" width="3.4" height="3.4" fill="#111" stroke="#ddd" stroke-width=".6"/><rect x="2.6" y="295.2" width="3.4" height="3.4" fill="#eee"/>
    <path d="M10.4 295 q1.2 -2 3.4 -1.6 v3.6 M10.4 295 l0 -1.4 M10.4 295 l1.4 0" fill="none" stroke="#d2d2d2" stroke-width=".9"/>
    <!-- swatches -->
    <rect x="6.02" y="307.3" width="10.1" height="9.4" fill="#fcfcfc"/>
    <rect x="-.3" y="302.6" width="9.9" height="9.2" fill="#f4788c" stroke="#4b4b4b" stroke-width=".5"/>
    <!-- quick mask -->
    <rect x="2.2" y="322.6" width="9.8" height="7" fill="none" stroke="#d2d2d2" stroke-width="1.2"/><circle cx="7.1" cy="326.1" r="1.9" fill="none" stroke="#d2d2d2" stroke-width="1"/>
    <!-- screen mode -->
    <rect x="4.6" y="337" width="8" height="5.6" fill="#bdbdbd"/><rect x="2.4" y="339.2" width="8" height="5.6" fill="#dcdcdc" stroke="#4b4b4b" stroke-width=".6"/>
    </g>
    <!-- flyout corners -->
    <g fill="#cfcfcf"><path d="M13.1 30.6h1.6v-1.6z M13.1 44.6h1.6v-1.6z M13.1 58.6h1.6v-1.6z M13.1 73h1.6v-1.6z M13.1 87h1.6v-1.6z M13.1 102h1.6v-1.6z M13.1 116h1.6v-1.6z M13.1 131h1.6v-1.6z M13.1 145h1.6v-1.6z M13.1 159h1.6v-1.6z M13.1 173h1.6v-1.6z M13.1 187h1.6v-1.6z M13.1 201h1.6v-1.6z M13.1 217.4h1.6v-1.6z M13.1 231h1.6v-1.6z M13.1 246h1.6v-1.6z M13.1 260h1.6v-1.6z M13.1 276h1.6v-1.6z M11.1 347h1.6v-1.6z"/></g>
  </svg>
</div>

<!-- ===== status bar ===== -->
<div class="a" style="left:19px;top:370px;width:137px;height:10.6px;background:#484848"></div>
<svg style="left:46px;top:372.4px" width="11" height="5" viewBox="0 0 11 5"><rect x=".4" y=".4" width="10.2" height="4.2" rx="1" fill="none" stroke="#dedede" stroke-width=".9"/><circle cx="3.4" cy="2.5" r="1.1" fill="#dedede"/><circle cx="7.4" cy="2.5" r="1.1" fill="#dedede"/></svg>

<!-- ===== timeline panel ===== -->
<div class="a" style="left:19px;top:380.6px;width:686px;height:44px;background:#353535"></div>
<div class="a" style="left:19px;top:381.2px;width:57px;height:10px;background:#4d4d4d"></div>
<div class="a" style="left:19px;top:391.2px;width:138px;height:20px;background:#4a4a4a"></div>
<div class="a" style="left:19px;top:411.4px;width:138px;height:.9px;background:#383838"></div>
<div class="a" style="left:19px;top:412.3px;width:178px;height:12px;background:#4a4a4a"></div>
<div class="a" style="left:88px;top:394px;width:13.6px;height:13.2px;background:#2e2e2e;border-radius:1px"></div>
<div class="a" style="left:122px;top:394px;width:1px;height:14px;background:#3a3a3a"></div>
<svg style="left:19px;top:392px" width="140" height="32" viewBox="19 392 140 32" fill="#e2e2e2">
  <g fill="#8b8b8b"><path d="M23.6 398.4h1.2v5.4h-1.2z M30 398.4v5.4l-4.6-2.7z"/><path d="M45.6 398.4v5.4l-4.6-2.7z M46.4 398.4h1.2v5.4h-1.2z"/></g>
  <path d="M57.8 397.6 L63.4 401 L57.8 404.4Z"/>
  <path d="M74.4 398.4h1.2v5.4h-1.2z M76.4 398.4l4.6 2.7l-4.6 2.7z"/>
  <path d="M90.6 399.6h1.8l2.6-2.4v7.6l-2.6-2.4h-1.8z"/><path d="M96.2 399 q1.6 2 0 4" fill="none" stroke="#e2e2e2" stroke-width=".9"/>
  <circle cx="111.4" cy="401.2" r="2.1" fill="none" stroke="#e2e2e2" stroke-width="1.5"/><path d="M115.2 405.6h1.8v-1.8z"/>
  <g fill="none" stroke="#e2e2e2" stroke-width="1"><circle cx="128.6" cy="399" r="1.4"/><circle cx="128.6" cy="403.4" r="1.4"/><path d="M129.8 399.8 L135.6 403.6 M129.8 402.6 L135.6 398.4"/></g>
  <rect x="146" y="397.6" width="7" height="7" fill="none" stroke="#e2e2e2" stroke-width="1"/><path d="M146.4 404.2 L152.6 398 V404.2Z"/>
  <path d="M24.6 418.4 L28.4 421 L24.6 423.6Z"/>
  <path d="M177.2 419.4h2.2v5h-2.2z M180.6 419.4h2.2v5h-2.2z" fill="#cfcfcf"/><path d="M185 421.6h3l-1.5 1.8z" fill="#cfcfcf"/>
</svg>
<!-- clip thumbnail and purple clip -->
<div class="a" style="left:196px;top:416.5px;width:1.4px;height:8px;background:#c23a2a"></div>
<div class="a" style="left:197.4px;top:416.5px;width:20.4px;height:8px;background:linear-gradient(90deg,#3a1c08 0,#8a4a10 25%,#f0a628 48%,#c97418 62%,#4a2608 100%)"></div>
<div class="a" style="left:217.8px;top:416.5px;width:92.4px;height:8px;background:#7d5fb0"></div>
<div class="a" style="left:305.5px;top:418px;width:2.6px;height:2.6px;border:.7px solid #d9cdee"></div>
<svg style="left:221px;top:417.4px" width="4" height="6" viewBox="0 0 4 6"><path d="M.4 .4 L3.4 2.6 L.4 4.8Z" fill="#e6dcf5"/></svg>

<!-- ===== right-bottom panels ===== -->
<div class="a" style="left:704px;top:370px;width:96px;height:8.4px;background:#444"></div>
<div class="a" style="left:704px;top:378.4px;width:96px;height:1.6px;background:#2d2d2d"></div>
<div class="a" style="left:704px;top:380px;width:96px;height:9.6px;background:#383838"></div>
<div class="a" style="left:704px;top:389.6px;width:74px;height:11.4px;background:#515151"></div>
<div class="a" style="left:704px;top:401px;width:74px;height:9.4px;background:#3a3a3a"></div>
<div class="a" style="left:704px;top:410.4px;width:74px;height:14px;background:#484848"></div>
<div class="a" style="left:778px;top:389.6px;width:22px;height:35px;background:#4c4c4c"></div>
<div class="a" style="left:793.4px;top:412px;width:7px;height:12px;background:#5a5a5a"></div>
<svg style="left:700px;top:370px" width="100" height="54" viewBox="700 370 100 54" fill="#e0e0e0">
  <path d="M793 384.4h2.4l-1.2 1.5z"/><path d="M796 384.2h3.4v.8h-3.4z M796 385.6h3.4v.8h-3.4z" fill="#aaa"/>
  <path d="M782 420.6h4.6v1.4h-4.6z M783.6 419v4.6h1.4v-4.6z"/>
  <path d="M796.2 416.6l1.6-1.8l1.6 1.8z"/><rect x="795" y="420" width="5" height="4" fill="#8c8c8c"/>
</svg>

<!-- ===== Outer dialog: Guardar para Web ===== -->
<div id="outer" class="a"></div>
<div class="a" style="left:155px;top:16px;width:2.2px;height:401.1px;background:#fbfbfb"></div>
<div class="a" style="left:155px;top:16px;width:549px;height:20.4px;background:#fdfdfd"></div>
<div class="a" style="left:157.6px;top:38.4px;width:19px;height:340px;background:#eeeeee;border-left:.8px solid #dcdcdc;border-right:.8px solid #dcdcdc"></div>
<div class="a" style="left:158px;top:89px;width:17.6px;height:1px;background:#7e7e7e"></div>
<div class="a" style="left:161.2px;top:93.6px;width:11.4px;height:11.4px;background:#000;box-shadow:0 0 0 .5px #fff,0 0 0 1.1px #c4c4c4"></div>
<div class="a" style="left:160px;top:109.4px;width:13.8px;height:11px;background:#d4e4f4;border:.8px solid #a9c6e4"></div>
<div class="a" style="left:162.6px;top:112px;width:8.6px;height:5.8px;background:#b8c0c8;border:.8px solid #8f979f"></div>
<div class="a" style="left:178px;top:39.4px;width:3.2px;height:341px;background:#c4c4c4;border-left:.9px solid #7d7d7d;border-right:.9px solid #8a8a8a;border-bottom:.9px solid #7d7d7d"></div>
<div class="a" style="left:178px;top:39.4px;width:3.2px;height:26px;background:#767676"></div>
<svg style="left:157px;top:38px" width="20" height="50" viewBox="157 38 20 50" fill="none" stroke="#9a9a9a" stroke-width=".8">
  <!-- hand -->
  <path d="M163.6 47.2 L161.8 44.6 Q162.2 43.6 163.4 44.4 L164.2 45.4 L164 41.8 Q164.8 41 165.4 41.8 L165.7 44.2 L166 40.8 Q166.8 40 167.5 40.8 L167.6 44.2 L168.4 41.4 Q169.2 40.8 169.8 41.6 L169.4 44.8 L170.6 43.2 Q171.4 42.8 171.8 43.6 L170.4 48.4 Q169.8 50.6 167.2 50.6 Q164.6 50.6 163.6 47.2Z"/>
  <!-- slice select -->
  <path d="M161.4 53.4 L165 56 L161.4 57.8Z M171.6 53 L163 60.4 L168.6 58 Z"/>
  <!-- zoom -->
  <circle cx="165.4" cy="66.8" r="3"/><path d="M167.6 69 L171.2 72.6" stroke-width="1.3"/>
  <!-- eyedropper -->
  <path d="M169.6 76 a1.4 1.4 0 0 1 1.9 1.9 L170 79.2 L168.4 77.6 Z M168 78.2 L169.6 79.8 L164.6 84.6 L162.8 85.4 L163.4 83.2 Z"/>
</svg>
<!-- bits of the outer dialog visible right of the inner one -->
<div class="a" style="left:693.8px;top:36.4px;width:8.2px;height:380px;background:#ebebeb"></div>
<div class="a" style="left:702px;top:36.4px;width:2px;height:380.6px;background:#f9f9f9"></div>
<i class="sq" style="top:68.8px"></i><i class="sq" style="top:81.8px"></i><i class="sq" style="top:94.8px"></i><i class="sq" style="top:107.8px"></i><i class="sq" style="top:120.8px"></i><i class="sq" style="top:133.8px"></i>
<i class="chv" style="top:161px"></i><i class="chv" style="top:175.6px"></i><i class="chv" style="top:343.4px;height:11px"></i><i class="chv" style="top:368.6px;height:11px"></i>
<div class="a" style="left:689.6px;top:382.8px;width:6.6px;height:9.6px;background:#cfe0f1;border:.8px solid #b4cbe2"></div>
<svg style="left:689px;top:160px" width="10" height="225" viewBox="689 160 10 225" fill="none" stroke="#a4a4a4" stroke-width=".9">
  <path d="M690.2 164.8l2.3 2.7l2.3-2.7 M690.2 179.2l2.3 2.7l2.3-2.7 M690.2 347.8l2.3 2.7l2.3-2.7 M690.2 373l2.3 2.7l2.3-2.7"/>
</svg>
<!-- below the inner dialog -->
<div class="a" style="left:183px;top:392px;width:6.4px;height:3.4px;background:#f4f4f4;border:.7px solid #cfcfcf"></div>
<div class="a" style="left:190.6px;top:392px;width:6.4px;height:3.4px;background:#f4f4f4;border:.7px solid #cfcfcf"></div>
<div class="a" style="left:200px;top:391.6px;width:41px;height:3px;background:#9bb8cd"></div>
<div class="a" style="left:181px;top:395.6px;width:508px;height:1px;background:#e7e7e7"></div>
<!-- bottom buttons of the outer dialog -->
<div class="gbtn" style="left:180.4px;top:401px;width:53.6px;height:10.6px"></div>
<div class="a" style="left:239.4px;top:399.6px;width:19px;height:13.4px;background:#fbfbfb;border:.9px solid #a8a8a8"></div>
<div class="a" style="left:258.4px;top:399.6px;width:9.2px;height:13.4px;background:#dadada;border:.9px solid #bcbcbc;border-left:0"></div>
<svg style="left:240px;top:400px" width="28" height="13" viewBox="240 400 28 13" fill="none" stroke="#a9a9a9" stroke-width=".8">
  <circle cx="246.4" cy="406.4" r="2.8" fill="#dcdcdc"/><circle cx="251.2" cy="406.6" r="2.9" fill="#c9c9c9"/><path d="M260.8 405.4l2 2l2-2"/>
</svg>
<div class="gbtn" style="left:487.4px;top:401px;width:64.2px;height:10.8px"></div>
<div class="gbtn" style="left:557.4px;top:401px;width:64.2px;height:10.8px"></div>
<div class="gbtn" style="left:627.6px;top:401px;width:64.2px;height:10.8px"></div>

<!-- ===== Inner dialog: Guardar optimizada como ===== -->
<div id="inner" class="a"></div>
<div class="a" style="left:181.3px;top:29px;width:508.2px;height:20.4px;background:#fff"></div>
<svg style="left:673px;top:34px" width="10" height="10" viewBox="0 0 10 10"><path d="M1.2 1.4 L8 8.2 M8 1.4 L1.2 8.2" stroke="#1a1a1a" stroke-width=".9" fill="none"/></svg>

<!-- look-in combo -->
<div class="combo w" style="left:253.6px;top:53.3px;width:190.6px;height:14.6px"></div>
<svg style="left:434px;top:57px" width="10" height="8" viewBox="0 0 10 8"><path d="M2.3 2.7 L4.6 5.1 L6.9 2.7" fill="none" stroke="#5a5a5a" stroke-width="1.05"/></svg>
<!-- videos library icon -->
<svg style="left:258px;top:55.6px" width="10" height="10" viewBox="0 0 10 10">
  <path d="M.6 7.4 L2.4 6 L7.4 6 L9.2 7.4 L9.2 8.6 L.6 8.6Z" fill="#27b3d8"/>
  <rect x="2.6" y=".3" width="4.6" height="7" fill="#2c3e55"/>
  <rect x="3.7" y="1" width="2.4" height="1.7" fill="#d8c24c"/><rect x="3.7" y="3.2" width="2.4" height="1.7" fill="#5fb0d6"/><rect x="3.7" y="5.3" width="2.4" height="1.5" fill="#7fc05c"/>
</svg>
<!-- toolbar icons -->
<svg style="left:452px;top:53px" width="60" height="14" viewBox="452 53 60 14">
  <circle cx="459" cy="60" r="4.4" fill="#1b67ae"/><circle cx="459" cy="59.4" r="3.4" fill="#2f8edb"/><circle cx="459" cy="60" r="4.4" fill="none" stroke="#0f4a86" stroke-width=".6"/>
  <path d="M460.8 59.2h-2v-1.5l-2.6 2.3l2.6 2.3v-1.5h2z" fill="#fff"/>
  <path d="M467.4 58.6h3l.8 .9h3.4v4.6h-7.2z" fill="#f0cf54"/><path d="M467.4 58.6h3l.8 .9h3.4v1h-7.2z" fill="#d8b23a"/>
  <path d="M471.8 55.2l2.8 3h-1.6v3.2h-2.4v-3.2h-1.6z" fill="#2fa32f" stroke="#1d7a1d" stroke-width=".4"/>
  <path d="M480 57.4h3l.8 .9h4v5.4h-7.8z" fill="#f3d25c"/><path d="M480 59.4h8.6l-1 4.3h-7.6z" fill="#f8e08a"/>
  <circle cx="487.2" cy="57.2" r="1.6" fill="#f08a2c"/>
  <rect x="492" y="55.8" width="9.2" height="8" rx=".8" fill="#2d8fe0"/><rect x="493.2" y="57" width="6.8" height="5.6" fill="#fff"/><rect x="493.8" y="57.6" width="2.2" height="4.4" fill="#a8d4f6"/><rect x="496.8" y="57.6" width="2.6" height="4.4" fill="#f4d66a"/>
  <path d="M503 58.2h5l-2.5 3z" fill="#111"/>
</svg>

<!-- places bar -->
<div class="a" style="left:187px;top:73.4px;width:62.6px;height:272px;background:#f3f3f3"></div>
<svg style="left:186px;top:73px" width="67" height="200" viewBox="186 73 67 200">
  <!-- quick access star -->
  <path d="M222.5 79.8 L223.7 85.9 L229.6 87.7 L224.1 90.7 L224.2 96.8 L219.7 92.6 L213.9 94.6 L216.5 89.0 L212.8 84.1 L219.0 84.8Z" fill="#1a9ff0"/>
  <path d="M212.6 82.2l4 1.2 M211.4 84.6l3.6 .8 M213.6 80.4l3.4 1.6" stroke="#7ccaf8" stroke-width=".8" fill="none"/>
  <!-- desktop -->
  <rect x="207.6" y="120.2" width="20.6" height="13.8" rx=".8" fill="#159af0"/><rect x="207.6" y="132.4" width="20.6" height="1.6" fill="#0c7fd6"/>
  <!-- libraries -->
  <path d="M208 158.4h6.4l1.4 1.8h12v13.4h-19.8z" fill="#f8df8a"/><path d="M208 158.4h6.4l1.4 1.8h12v2h-19.8z" fill="#eec252"/>
  <rect x="209.4" y="159" width="3.6" height="1" fill="#fff8d2"/>
  <path d="M210.6 175.2v-6.4q0-1.6 1.6-1.6h11.6q1.6 0 1.6 1.6v6.4h-3.6v-3.6q0-1-1-1h-5.6q-1 0-1 1v3.6z" fill="#1e9be8"/>
  <!-- this pc -->
  <path d="M211.8 199.2 L226.6 201.6 L226.6 212.4 L211.8 209.2Z" fill="#1b9ce8"/><path d="M212.8 200.5 L225.6 202.6 L225.6 211.1 L212.8 208.3Z" fill="#39bef5"/>
  <path d="M208.6 214 L213.6 210.6 L225.4 212.8 L220.6 216.8Z" fill="#cfd2d5"/><path d="M210.6 213.8 L214 211.6 L223 213.3 L220 215.8Z" fill="#f0f1f3"/>
  <!-- network -->
  <circle cx="222.4" cy="244.6" r="6.6" fill="#2b93d6"/><path d="M218 240.2q3-3 7-1.6q-1 2.6-3.6 2.4q-.6 2.4-3.4 1.4z M226 243q2 .6 2.6 3.4q-1.6 2.6-3.6 3.6q-.6-3 1-7z" fill="#7fd0f2"/>
  <path d="M208.6 243.6 L220.6 245.4 L220.6 253.6 L208.6 251.2Z" fill="#1c9ae6"/><path d="M209.6 244.8 L219.6 246.4 L219.6 252.4 L209.6 250.4Z" fill="#37bdf5"/>
  <path d="M212.4 253.2 L216 253.8 L216 255.6 L212.4 255Z M210.4 255.4 L218.6 256.8 L218.6 257.6 L210.4 256.2Z" fill="#9aa4ad"/>
</svg>

<!-- file list -->
<div class="a" style="left:253.6px;top:73px;width:431.2px;height:233.4px;background:#fff"></div>
<div class="a" style="left:256.4px;top:76px;width:87.6px;height:79px;border:.9px solid #b2b2b2;background:#fff"></div>
<svg style="left:276px;top:82px" width="44" height="60" viewBox="276 82 44 60">
  <defs><linearGradient id="fg" x1="0" y1="0" x2="1" y2="1"><stop offset="0" stop-color="#fde9a6"/><stop offset="1" stop-color="#f9db80"/></linearGradient></defs>
  <path d="M279.7 83.8 L313 83.8 L313 112.5 L315.8 114 L315.8 131.6 L291 131.6Z" fill="#f6d26c"/>
  <path d="M313 112.5 L315.8 114 L315.8 131.6 L313 131.6Z" fill="#f0c75c"/>
  <path d="M291.4 92.3 L295 92.3 L295 131.6 L291.4 131.6Z" fill="#f1ca62"/>
  <path d="M279.7 83.8 L291.4 92.3 L291.4 139 L279.7 131.6Z" fill="url(#fg)"/>
</svg>

<!-- bottom fields -->
<div class="combo w" style="left:327.6px;top:313.4px;width:278.4px;height:13.4px"></div>
<div class="combo" style="left:327.6px;top:332.4px;width:278.4px;height:12.8px"></div>
<div class="combo" style="left:327.6px;top:354.2px;width:157.4px;height:12.8px"></div>
<div class="combo" style="left:327.6px;top:371.2px;width:157.4px;height:13px;background:#cecece;border-color:#c4c4c4"></div>
<svg style="left:470px;top:310px" width="140" height="80" viewBox="470 310 140 80" fill="none" stroke="#555" stroke-width="1">
  <path d="M597.8 318.9l2.4 2.5l2.4-2.5 M597.8 337.7l2.4 2.5l2.4-2.5 M477.2 359.5l2.4 2.5l2.4-2.5"/><path d="M477.2 376.5l2.4 2.5l2.4-2.5" stroke="#b4b4b4"/>
</svg>
<div class="btn" style="left:630.3px;top:313.6px;width:53.8px;height:14.2px;border:1.3px solid #177bd4;box-shadow:inset 0 0 0 .4px #4a9be0"></div>
<div class="btn" style="left:630.5px;top:331.5px;width:53.6px;height:14.2px;border-color:#bdbdbd"></div>
<svg style="left:680.4px;top:383px" width="8" height="8" viewBox="0 0 8 8" fill="#b0b0b0"><rect x="5.6" y="1" width="1.2" height="1.2"/><rect x="3.6" y="3" width="1.2" height="1.2"/><rect x="5.6" y="3" width="1.2" height="1.2"/><rect x="1.6" y="5" width="1.2" height="1.2"/><rect x="3.6" y="5" width="1.2" height="1.2"/><rect x="5.6" y="5" width="1.2" height="1.2"/></svg>

<span id="t0" class="t" style="left:186.60px;top:34.68px;font-size:9.3px;color:#000;font-weight:normal;transform:scaleX(0.8918);">Guardar optimizada como</span>
<span id="t1" class="t" style="left:210.60px;top:56.83px;font-size:8.4px;color:#000;font-weight:normal;transform:scaleX(0.8344);">Guardar en:</span>
<span id="t2" class="t" style="left:270.40px;top:56.83px;font-size:8.4px;color:#000;font-weight:normal;transform:scaleX(0.9188);">Videos</span>
<span id="t3" class="t" style="left:191.60px;top:100.18px;font-size:8.7px;color:#000;font-weight:normal;transform:scaleX(0.9444);">Acceso rápido</span>
<span id="t4" class="t" style="left:201.00px;top:140.08px;font-size:8.7px;color:#000;font-weight:normal;transform:scaleX(0.9222);">Escritorio</span>
<span id="t5" class="t" style="left:197.70px;top:179.58px;font-size:8.7px;color:#000;font-weight:normal;transform:scaleX(0.9544);">Bibliotecas</span>
<span id="t6" class="t" style="left:196.50px;top:219.58px;font-size:8.7px;color:#000;font-weight:normal;transform:scaleX(0.9261);">Este equipo</span>
<span id="t7" class="t" style="left:210.70px;top:259.78px;font-size:8.7px;color:#000;font-weight:normal;transform:scaleX(0.8847);">Red</span>
<span id="t8" class="t" style="left:284.40px;top:146.18px;font-size:8.7px;color:#000;font-weight:normal;transform:scaleX(0.9017);">Capturas</span>
<span id="t9" class="t" style="left:255.00px;top:317.14px;font-size:8.5px;color:#000;font-weight:normal;transform:scaleX(0.8656);">Nombre de archivo:</span>
<span id="t10" class="t" style="left:330.50px;top:315.75px;font-size:8.5px;color:#000;font-weight:normal;transform:scaleX(0.8924);">Paisaje.gif</span>
<span id="t11" class="t" style="left:255.00px;top:334.14px;font-size:8.5px;color:#000;font-weight:normal;transform:scaleX(0.8232);">Formato:</span>
<span id="t12" class="t" style="left:330.50px;top:334.14px;font-size:8.5px;color:#000;font-weight:normal;transform:scaleX(0.8802);">Solo imágenes</span>
<span id="t13" class="t" style="left:255.00px;top:355.84px;font-size:8.5px;color:#000;font-weight:normal;transform:scaleX(0.8529);">Ajustes:</span>
<span id="t14" class="t" style="left:330.50px;top:355.84px;font-size:8.5px;color:#000;font-weight:normal;transform:scaleX(0.8342);">Ajustes por defecto</span>
<span id="t15" class="t" style="left:255.00px;top:374.25px;font-size:8.5px;color:#000;font-weight:normal;transform:scaleX(0.8355);">Sectores:</span>
<span id="t16" class="t" style="left:330.50px;top:374.25px;font-size:8.5px;color:#8c8c8c;font-weight:normal;transform:scaleX(0.8337);">Todos los sectores</span>
<span id="t17" class="t" style="left:643.90px;top:316.50px;font-size:8.8px;color:#000;font-weight:normal;transform:scaleX(0.8333);">Guardar</span>
<span id="t18" class="t" style="left:642.90px;top:334.30px;font-size:8.8px;color:#000;font-weight:normal;transform:scaleX(0.8433);">Cancelar</span>
<span id="t19" class="t" style="left:160.00px;top:21.41px;font-size:8.9px;color:#a0a0a0;font-weight:normal;transform:scaleX(0.8906);">Guardar para Web (100%)</span>
<span id="t20" class="t" style="left:187.00px;top:402.49px;font-size:7.6px;color:#9a9a9a;font-weight:normal;transform:scaleX(0.8099);">Previsualizar...</span>
<span id="t21" class="t" style="left:505.00px;top:402.69px;font-size:7.6px;color:#9a9a9a;font-weight:normal;transform:scaleX(0.8585);">Guardar...</span>
<span id="t22" class="t" style="left:576.50px;top:402.69px;font-size:7.6px;color:#9a9a9a;font-weight:normal;transform:scaleX(0.8226);">Cancelar</span>
<span id="t23" class="t" style="left:649.00px;top:402.69px;font-size:7.6px;color:#9a9a9a;font-weight:normal;transform:scaleX(0.9110);">Hecho</span>
<span id="t24" class="t" style="left:690.40px;top:333.29px;font-size:7.6px;color:#5e5e5e;font-weight:normal;transform:scaleX(0.8573);">%</span>
<span id="t25" class="t" style="left:23.60px;top:370.66px;font-size:7.4px;color:#e8e8e8;font-weight:bold;transform:scaleX(0.9150);">100%</span>
<span id="t26" class="t" style="left:85.50px;top:370.66px;font-size:7.4px;color:#e8e8e8;font-weight:bold;transform:scaleX(0.8795);">Doc: 1.03 MB/9.37 MB</span>
<span id="t27" class="t" style="left:23.60px;top:382.46px;font-size:7.4px;color:#e4e4e4;font-weight:bold;transform:scaleX(0.8709);">Línea de tiempo</span>
<span id="t28" class="t" style="left:34.40px;top:419.96px;font-size:8.0px;color:#d8d8d8;font-weight:normal;transform:scaleX(0.7985);">Capa 3</span>
<span id="t29" class="t" style="left:228.50px;top:414.29px;font-size:7.6px;color:#e6dcf5;font-weight:normal;transform:scaleX(0.8776);">Capa 3</span>

</div>
</body>
</html>
